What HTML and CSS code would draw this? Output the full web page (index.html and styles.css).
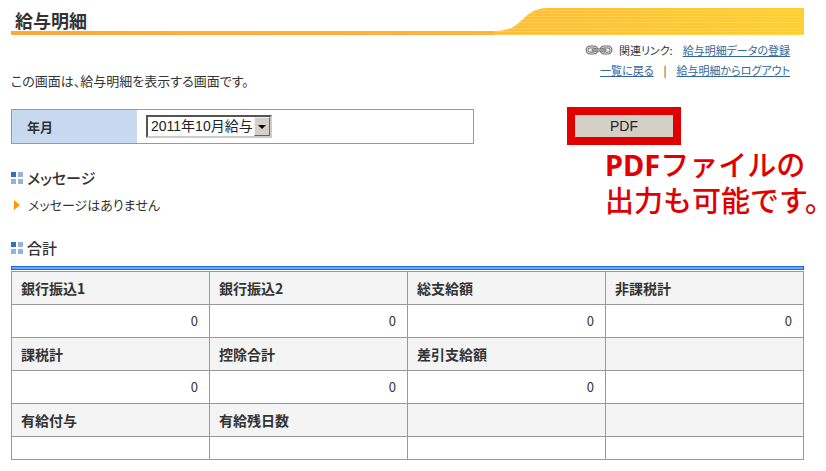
FILE: index.html
```html
<!DOCTYPE html>
<html lang="ja">
<head>
    <meta charset="UTF-8">
    <title>給与明細</title>
    <link rel="stylesheet" href="styles.css">
</head>
<body>
    <div class="wrapper">
        <header class="header">
            <h1 class="title">給与明細</h1>
            <svg class="header-wave" viewBox="0 0 310 27" aria-hidden="true">
                <defs>
                    <linearGradient id="wave" x1="0" x2="1">
                        <stop offset="0" stop-color="#ffbb3a"/>
                        <stop offset="1" stop-color="#ffcf2e"/>
                    </linearGradient>
                    <pattern id="stripes" width="4" height="3" patternUnits="userSpaceOnUse">
                        <rect width="4" height="1" y="2" fill="#ffdb68" opacity=".6"/>
                    </pattern>
                </defs>
                <path fill="url(#wave)" d="M0 27V23C16 23 20 19 28 12C36 4 42 0 54 0H310V27Z"/>
                <path fill="url(#stripes)" d="M0 27V23C16 23 20 19 28 12C36 4 42 0 54 0H310V27Z"/>
            </svg>
        </header>

        <div class="top">
            <p class="intro">この画面は、給与明細を表示する画面です。</p>
            <nav class="links">
                <div class="links-row">
                    <svg class="chain" width="28" height="10" viewBox="0 0 28 10" fill="none" aria-hidden="true">
                        <g stroke="#777" stroke-width="3">
                            <rect x="2" y="2" width="10" height="6" rx="3"/>
                            <rect x="16" y="2" width="10" height="6" rx="3"/>
                        </g>
                        <g stroke="#ddd" stroke-width="1">
                            <rect x="2" y="2" width="10" height="6" rx="3"/>
                            <rect x="16" y="2" width="10" height="6" rx="3"/>
                        </g>
                        <path stroke="#666" stroke-width="3" stroke-linecap="round" d="M8 5H20"/>
                        <path stroke="#ddd" stroke-linecap="round" d="M8 5H20"/>
                    </svg>
                    <span class="links-label">関連リンク:</span>
                    <a href="#">給与明細データの登録</a>
                </div>
                <div class="links-row">
                    <a href="#">一覧に戻る</a>
                    <span class="sep">|</span>
                    <a href="#">給与明細からログアウト</a>
                </div>
            </nav>
        </div>

        <form class="form">
            <div class="field">
                <label class="field-label" for="month">年月</label>
                <div class="select">
                    <select id="month" name="month">
                        <option>2011年10月給与</option>
                    </select>
                    <span class="select-arrow"></span>
                </div>
            </div>
            <div class="pdf">
                <button type="button">PDF</button>
                <p class="pdf-note"><b>PDF</b>ファイルの<br>出力も可能です。</p>
            </div>
        </form>

        <h2 class="heading"><span class="squares"><i></i><i></i><i></i><i></i></span>メッセージ</h2>
        <p class="message">メッセージはありません</p>

        <h2 class="heading"><span class="squares"><i></i><i></i><i></i><i></i></span>合計</h2>
        <div class="bar"></div>
        <table class="total">
            <tr><th>銀行振込1</th><th>銀行振込2</th><th>総支給額</th><th>非課税計</th></tr>
            <tr><td>0</td><td>0</td><td>0</td><td>0</td></tr>
            <tr><th>課税計</th><th>控除合計</th><th>差引支給額</th><th></th></tr>
            <tr><td>0</td><td>0</td><td>0</td><td></td></tr>
            <tr><th>有給付与</th><th>有給残日数</th><th></th><th></th></tr>
            <tr class="empty"><td></td><td></td><td></td><td></td></tr>
        </table>
    </div>
</body>
</html>
```
FILE: styles.css
```css
body, html {
    margin: 0;
    padding: 0;
}
body {
    background: #fff;
    color: #333;
    font: 13px/20px "Noto Sans CJK JP", sans-serif;
    font-feature-settings: "palt";
}
h1, h2, p {
    margin: 0;
}
.wrapper {
    padding: 8px 22px 11px 11px;
}

/* header */
.header {
    display: flex;
    justify-content: space-between;
    height: 27px;
    background: linear-gradient(to right, #ffa93c, #ffbb3a) bottom / 100% 4px no-repeat;
}
.title {
    padding-left: 4px;
    font-size: 18px;
    line-height: 24px;
    font-weight: bold;
}
.header-wave {
    display: block;
    width: 310px;
    height: 27px;
}

/* intro and links */
.top {
    display: flex;
    justify-content: space-between;
    align-items: flex-end;
    padding-top: 5px;
}
.links {
    padding: 0 14px 11px 0;
    font-size: 11px;
}
.links-row {
    display: flex;
    justify-content: flex-end;
    align-items: center;
}
.links a {
    color: #33669a;
}
.links-label {
    margin: 0 10px 0 6px;
}
.sep {
    margin: 0 10px;
}

/* month */
.form {
    display: flex;
    align-items: center;
    margin-top: 16px;
}
.field {
    display: flex;
    box-sizing: border-box;
    width: 463px;
    height: 35px;
    border: 1px solid #999;
}
.field-label {
    box-sizing: border-box;
    width: 125px;
    padding-left: 15px;
    background: #c8d8ee;
    font-weight: bold;
    line-height: 33px;
}
.select {
    position: relative;
    align-self: center;
    margin-left: 9px;
}
.select select {
    display: block;
    box-sizing: border-box;
    width: 126px;
    height: 23px;
    padding: 0 0 0 3px;
    border: 2px solid;
    border-color: #555 #ccc #ccc #555;
    border-radius: 0;
    background: #fff;
    color: #222;
    font: 14px/19px "Liberation Sans", "Noto Sans CJK JP", sans-serif;
    -webkit-appearance: none;
    appearance: none;
}
.select-arrow {
    position: absolute;
    top: 2px;
    right: 2px;
    box-sizing: border-box;
    width: 16px;
    height: 19px;
    border: 1px solid;
    border-color: #eee #666 #666 #eee;
    background: #d4d0c8;
    pointer-events: none;
}
.select-arrow::after {
    content: "";
    position: absolute;
    top: 7px;
    left: 3px;
    border: 4px solid transparent;
    border-top-color: #000;
    border-bottom: 0;
}

/* pdf */
.pdf {
    position: relative;
    margin-left: 93px;
}
.pdf button {
    display: block;
    box-sizing: border-box;
    width: 114px;
    height: 38px;
    padding: 0;
    border: 8px solid #e00000;
    border-radius: 0;
    background: #d4d0c8;
    color: #222;
    font: 14px "Liberation Sans", sans-serif;
}
.pdf-note {
    position: absolute;
    top: 39px;
    left: 38px;
    color: #e00000;
    font-size: 29px;
    line-height: 34px;
    font-weight: 500;
    font-feature-settings: "halt";
    white-space: nowrap;
}
.pdf-note b {
    font-family: "Noto Sans", sans-serif;
}

/* sections */
.heading {
    display: flex;
    align-items: center;
    margin-top: 23px;
    font-size: 15px;
    font-weight: 500;
}
.squares {
    display: grid;
    grid-template-columns: 5px 5px;
    gap: 2px;
    margin-right: 4px;
}
.squares i {
    height: 5px;
    background: #93b3dc;
}
.squares i:first-child {
    background: #3570b8;
}
.message {
    display: flex;
    align-items: center;
    margin-top: 7px;
    padding-left: 3px;
}
.message::before {
    content: "";
    margin-right: 8px;
    border: 5px solid transparent;
    border-left: 6px solid #ff9900;
    border-right: 0;
}

/* total */
.bar {
    height: 2px;
    margin: 8px 0 1px;
    border: 1px solid #1a68ee;
    background: #70a8fa;
}
.total {
    width: 100%;
    table-layout: fixed;
    border-collapse: collapse;
}
.total th, .total td {
    box-sizing: border-box;
    height: 33px;
    padding: 0 11px 0 9px;
    border: 1px solid #999;
}
.total th {
    background: #f4f4f4;
    font-size: 14px;
    text-align: left;
}
.total td {
    text-align: right;
}
.total .empty td {
    height: 23px;
}
```
